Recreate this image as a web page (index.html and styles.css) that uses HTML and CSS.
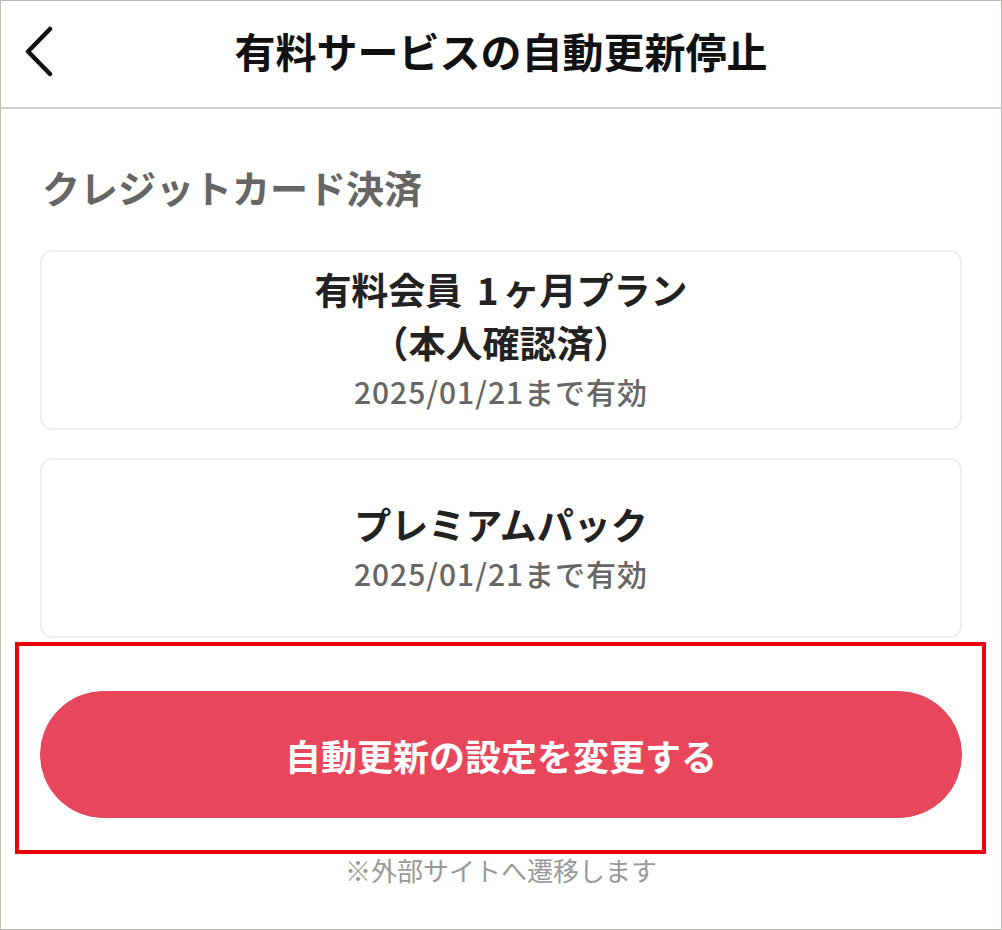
FILE: index.html
```html
<!DOCTYPE html>
<html lang="ja">
<head>
<meta charset="utf-8">
<title>有料サービスの自動更新停止</title>
<link rel="stylesheet" href="styles.css">
</head>
<body>
<div class="page">
  <header class="topbar">
    <div class="back">
      <svg width="34" height="52" viewBox="0 0 34 52" aria-hidden="true">
        <path d="M25 3 L3 25.5 L25 48" fill="none" stroke="#111" stroke-width="4.5" stroke-linecap="round" stroke-linejoin="round"/>
      </svg>
    </div>
    <h1 class="title">有料サービスの自動更新停止</h1>
    <div></div>
  </header>
  <main class="content">
    <h2 class="section-label">クレジットカード決済</h2>
    <div class="cards">
      <div class="card">
        <p class="plan">有料会員 <span class="num">1</span>ヶ月プラン<br>（本人確認済）</p>
        <p class="until">2025/01/21まで有効</p>
      </div>
      <div class="card">
        <p class="plan">プレミアムパック</p>
        <p class="until">2025/01/21まで有効</p>
      </div>
    </div>
    <div class="highlight">
      <button class="cta" type="button">自動更新の設定を変更する</button>
    </div>
    <p class="note">※外部サイトへ遷移します</p>
  </main>
</div>
</body>
</html>
```

FILE: styles.css
```css
html, body {
  margin: 0;
  padding: 0;
  background: #fff;
}
body {
  font-family: "Noto Sans CJK JP", "Noto Sans", sans-serif;
}
.page {
  width: 1002px;
  height: 930px;
  box-sizing: border-box;
  border: 1px solid #bdbbb6;
  overflow: hidden;
}
.topbar {
  height: 108px;
  box-sizing: border-box;
  border-bottom: 2px solid #cfcfcf;
  display: grid;
  grid-template-columns: 1fr auto 1fr;
  align-items: center;
}
.back {
  padding-left: 24px;
  display: flex;
  align-items: center;
  height: 52px;
  margin-top: -5px;
}
.title {
  margin: 0;
  font-size: 41px;
  font-weight: 700;
  color: #111;
  letter-spacing: 0;
  line-height: 1;
  margin-top: -8px;
}
.content {
  padding: 0 39px;
}
.section-label {
  margin: 51px 0 0 2px;
  font-size: 38px;
  font-weight: 700;
  color: #666;
  line-height: 54px;
}
.cards {
  margin-top: 36px;
  display: flex;
  flex-direction: column;
  gap: 28px;
}
.card {
  height: 180px;
  box-sizing: border-box;
  border: 2px solid #efefef;
  border-radius: 12px;
  display: flex;
  flex-direction: column;
  justify-content: center;
  align-items: center;
  text-align: center;
}
.plan {
  margin: 0;
  font-size: 37px;
  font-weight: 700;
  color: #222;
  line-height: 53px;
  margin-top: -4px;
}
.num {
  margin: 0 4px 0 6px;
}
.until {
  margin: 0;
  font-size: 30px;
  font-weight: 500;
  color: #666;
  line-height: 44px;
  letter-spacing: 1px;
}
.highlight {
  margin: 4px -24px 0 -25px;
  border: 4px solid #e8000b;
  padding: 45px 20px 32px 21px;
}
.cta {
  display: block;
  width: 100%;
  height: 127px;
  border: 1px solid #e2425a;
  border-radius: 64px;
  background: #e8475b;
  color: #fff;
  font-family: inherit;
  font-size: 36px;
  font-weight: 700;
  padding: 0;
  cursor: pointer;
}
.note {
  margin: -2px 0 0;
  text-align: center;
  font-size: 26px;
  font-weight: 400;
  color: #999;
  line-height: 36px;
}
```
